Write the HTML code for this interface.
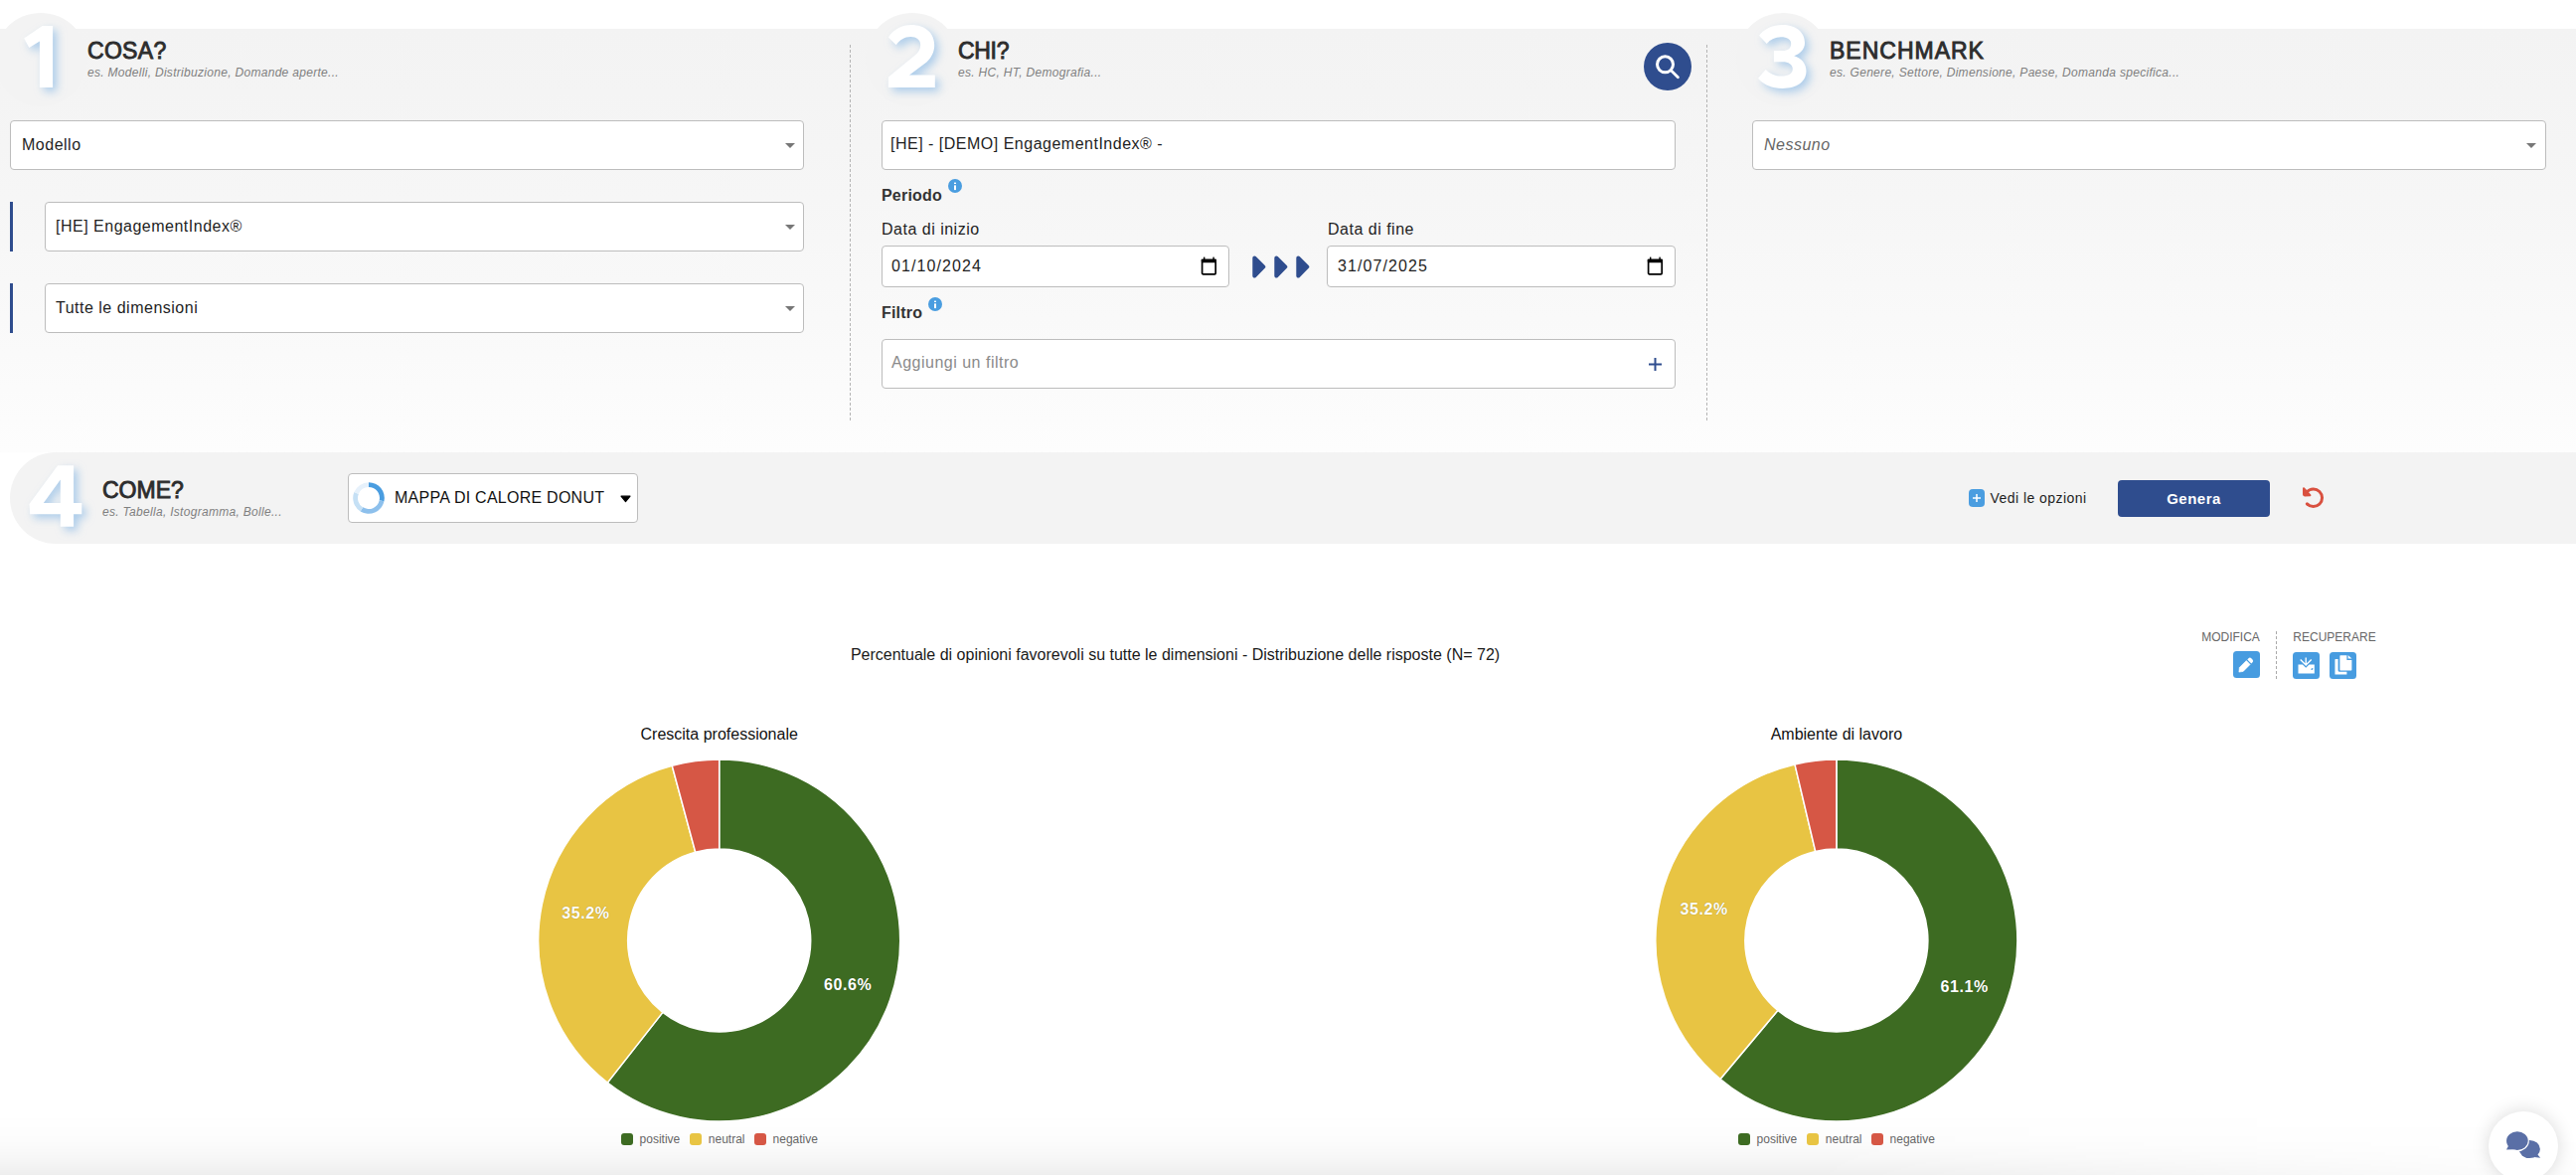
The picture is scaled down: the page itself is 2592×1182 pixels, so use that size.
<!DOCTYPE html>
<html><head><meta charset="utf-8"><style>
*{box-sizing:border-box;margin:0;padding:0}
html,body{width:2592px;height:1182px;overflow:hidden;background:#fff;font-family:"Liberation Sans",sans-serif;position:relative}
.t{position:absolute;white-space:nowrap}
.a{position:absolute}
.box{position:absolute;background:#fff;border:1px solid #bdbdbd;border-radius:4px}
.h{font-weight:bold;color:#333}
.hh{font-weight:normal;color:#2d2d2d;-webkit-text-stroke:0.9px #2d2d2d}
.sub{font-style:italic;color:#808080;letter-spacing:0.3px}
.num{position:absolute;font-weight:bold;color:#fff;font-size:88px;line-height:88px;text-shadow:3px 4px 6px rgba(90,150,215,0.55)}
.circ{position:absolute;width:94px;height:94px;border-radius:50%;background:#f3f3f3}
.caret{position:absolute;width:0;height:0;border-left:5px solid transparent;border-right:5px solid transparent;border-top:5px solid #777}
.dash{position:absolute;width:0;border-left:1px dashed #b5b5b5}
.ui{color:#1e1e1e;letter-spacing:0.5px}
.info{position:absolute;width:14px;height:14px;border-radius:50%;background:#4a9de0;color:#fff;font-size:10px;line-height:14px;text-align:center;font-weight:bold}
.btn{position:absolute;width:27px;height:27px;border-radius:3.5px;background:#479ce0}
</style></head><body>
<div class="a" style="left:0;top:1120px;width:2592px;height:62px;background:linear-gradient(rgba(0,0,0,0) 0%,rgba(0,0,0,0.012) 45%,rgba(0,0,0,0.035) 75%,rgba(0,0,0,0.068) 100%);-webkit-mask-image:linear-gradient(to right,#000 70%,rgba(0,0,0,0.15))"></div>
<div class="a" style="left:0;top:29px;width:2592px;height:426px;background:linear-gradient(#f3f3f3 0%,#f4f4f4 15%,#f6f6f6 40%,#f8f8f8 60%,#fbfbfb 85%,#fdfdfd 100%)"></div>
<div class="circ" style="left:-6px;top:13px"></div>
<div class="circ" style="left:871px;top:13px"></div>
<div class="circ" style="left:1747px;top:13px"></div>
<svg class="a" style="left:0px;top:0px;overflow:visible" width="80" height="110" viewBox="0 0 80 110"><g style="filter:drop-shadow(4px 4px 4px rgba(125,178,228,0.6))"><path d="M24.2,38.4 L42.6,26.1 L53.1,26.1 L53.1,88.1 L39.9,88.1 L39.9,41.5 L29.3,47.9 Z" fill="#fff" fill-rule="evenodd"/></g></svg>
<svg class="a" style="left:870px;top:0px;overflow:visible" width="90" height="110" viewBox="870 0 90 110"><g style="filter:drop-shadow(4px 4px 4px rgba(125,178,228,0.6))"><path d="M893.9,37.4 C899.5,29.5 907.5,25.1 917,25.1 C931,25.1 940.2,33.5 940.2,45.2 C940.2,52.5 937.2,57.8 932.7,62.2 L915,75.6 L940.8,75.6 L940.8,88.1 L893.9,88.1 L893.9,77.6 L920.5,55.8 C924.2,52.6 926.2,49.3 926.2,45.2 C926.2,40.2 922.2,37 916.3,37 C910.2,37 905.5,40 901.7,45.2 Z" fill="#fff" fill-rule="evenodd"/></g></svg>
<svg class="a" style="left:1750px;top:0px;overflow:visible" width="90" height="110" viewBox="1750 0 90 110"><g style="filter:drop-shadow(4px 4px 4px rgba(125,178,228,0.6))"><path d="M1770,35.8 C1775.5,29 1783.5,25 1793.5,25 C1806.5,25 1816,32 1816,42.9 C1816,49.5 1811.5,54 1805.2,56.2 C1812.5,58.3 1817.5,63.8 1817.5,71.5 C1817.5,82 1808,88.9 1793.5,88.9 C1783,88.9 1774.5,85 1769,78.7 L1776.7,70 C1780.5,74 1786,76.6 1792.5,76.6 C1799.5,76.6 1803.8,74 1803.8,69.5 C1803.8,65 1799.8,62.3 1793.5,62.3 L1784.9,62.3 L1784.9,51 L1793.5,51 C1799,51 1802.2,48.2 1802.2,43.9 C1802.2,39.8 1798.2,37.3 1792,37.3 C1786.2,37.3 1781.5,39.6 1777.7,43.9 Z" fill="#fff" fill-rule="evenodd"/></g></svg>
<div class="t hh" style="left:88px;top:39.53px;font-size:23px;line-height:23px;letter-spacing:0.3px">COSA?</div>
<div class="t sub" style="left:88px;top:66.84px;font-size:12px;line-height:12px;">es. Modelli, Distribuzione, Domande aperte...</div>
<div class="t hh" style="left:964px;top:39.53px;font-size:23px;line-height:23px;letter-spacing:-0.3px">CHI?</div>
<div class="t sub" style="left:964px;top:66.84px;font-size:12px;line-height:12px;">es. HC, HT, Demografia...</div>
<div class="t hh" style="left:1841px;top:39.53px;font-size:23px;line-height:23px;letter-spacing:1px">BENCHMARK</div>
<div class="t sub" style="left:1841px;top:66.84px;font-size:12px;line-height:12px;">es. Genere, Settore, Dimensione, Paese, Domanda specifica...</div>
<div class="dash" style="left:855px;top:45px;height:378px"></div>
<div class="dash" style="left:1717px;top:45px;height:378px"></div>
<div class="box" style="left:10px;top:121px;width:799px;height:50px"></div>
<div class="t ui" style="left:22px;top:137.96px;font-size:16px;line-height:16px;">Modello</div>
<div class="caret" style="left:789.6px;top:144px"></div>
<div class="a" style="left:10px;top:203px;width:3px;height:50px;background:#2f4d8e"></div>
<div class="box" style="left:45px;top:203px;width:764px;height:50px"></div>
<div class="t ui" style="left:56px;top:219.96px;font-size:16px;line-height:16px;">[HE] EngagementIndex®</div>
<div class="caret" style="left:789.6px;top:226px"></div>
<div class="a" style="left:10px;top:285px;width:3px;height:50px;background:#2f4d8e"></div>
<div class="box" style="left:45px;top:285px;width:764px;height:50px"></div>
<div class="t ui" style="left:56px;top:301.96px;font-size:16px;line-height:16px;">Tutte le dimensioni</div>
<div class="caret" style="left:789.6px;top:308px"></div>
<div class="a" style="left:1654px;top:43px;width:48px;height:48px;border-radius:50%;background:#2f4d8e"></div>
<svg class="a" style="left:1654px;top:43px" width="48" height="48" viewBox="0 0 48 48"><circle cx="21.5" cy="21.8" r="8" fill="none" stroke="#fff" stroke-width="3"/><line x1="27.6" y1="27.9" x2="34.4" y2="34.7" stroke="#fff" stroke-width="2.8" stroke-linecap="round"/></svg>
<div class="box" style="left:887px;top:121px;width:799px;height:50px"></div>
<div class="t ui" style="left:896px;top:137.46px;font-size:16px;line-height:16px;">[HE] - [DEMO] EngagementIndex® -</div>
<div class="t h" style="left:887px;top:188.76px;font-size:16px;line-height:16px;color:#333;letter-spacing:0.2px">Periodo</div>
<svg class="a" style="left:954px;top:180px" width="14" height="14" viewBox="0 0 14 14"><circle cx="7" cy="7" r="7" fill="#4a9de0"/><rect x="6" y="3.6" width="2" height="1.4" fill="#fff"/><rect x="6" y="6.4" width="2" height="4.7" fill="#fff"/></svg>
<div class="t ui" style="left:887px;top:222.96px;font-size:16px;line-height:16px;">Data di inizio</div>
<div class="t ui" style="left:1336px;top:222.96px;font-size:16px;line-height:16px;">Data di fine</div>
<div class="box" style="left:887px;top:247px;width:350px;height:42px"></div>
<div class="box" style="left:1335px;top:247px;width:351px;height:42px"></div>
<div class="t ui" style="left:897px;top:260.06px;font-size:16px;line-height:16px;letter-spacing:1.1px">01/10/2024</div>
<div class="t ui" style="left:1346px;top:260.06px;font-size:16px;line-height:16px;letter-spacing:1.1px">31/07/2025</div>
<svg class="a" style="left:1207.5px;top:258px" width="17" height="19" viewBox="0 0 17 19"><path d="M1.6,4.2 h13.6 v12.6 a1,1 0 0 1 -1,1 h-11.6 a1,1 0 0 1 -1,-1 z" fill="none" stroke="#000" stroke-width="1.7"/><rect x="0.8" y="2.6" width="15.2" height="3.6" rx="1" fill="#000"/><rect x="3" y="0.6" width="1.4" height="3" fill="#000"/><rect x="12.4" y="0.6" width="1.4" height="3" fill="#000"/></svg>
<svg class="a" style="left:1656.5px;top:258px" width="17" height="19" viewBox="0 0 17 19"><path d="M1.6,4.2 h13.6 v12.6 a1,1 0 0 1 -1,1 h-11.6 a1,1 0 0 1 -1,-1 z" fill="none" stroke="#000" stroke-width="1.7"/><rect x="0.8" y="2.6" width="15.2" height="3.6" rx="1" fill="#000"/><rect x="3" y="0.6" width="1.4" height="3" fill="#000"/><rect x="12.4" y="0.6" width="1.4" height="3" fill="#000"/></svg>
<svg class="a" style="left:1259.8px;top:257px" width="14" height="23" viewBox="0 0 14 23"><path d="M2.3,2.4 L11.3,11.4 L2.3,20.5 Z" fill="#2f4d8e" stroke="#2f4d8e" stroke-width="4" stroke-linejoin="round"/></svg>
<svg class="a" style="left:1281.8px;top:257px" width="14" height="23" viewBox="0 0 14 23"><path d="M2.3,2.4 L11.3,11.4 L2.3,20.5 Z" fill="#2f4d8e" stroke="#2f4d8e" stroke-width="4" stroke-linejoin="round"/></svg>
<svg class="a" style="left:1303.8px;top:257px" width="14" height="23" viewBox="0 0 14 23"><path d="M2.3,2.4 L11.3,11.4 L2.3,20.5 Z" fill="#2f4d8e" stroke="#2f4d8e" stroke-width="4" stroke-linejoin="round"/></svg>
<div class="t h" style="left:887px;top:306.86px;font-size:16px;line-height:16px;color:#333;letter-spacing:0.2px">Filtro</div>
<svg class="a" style="left:934px;top:298.5px" width="14" height="14" viewBox="0 0 14 14"><circle cx="7" cy="7" r="7" fill="#4a9de0"/><rect x="6" y="3.6" width="2" height="1.4" fill="#fff"/><rect x="6" y="6.4" width="2" height="4.7" fill="#fff"/></svg>
<div class="box" style="left:887px;top:341px;width:799px;height:50px"></div>
<div class="t ui" style="left:897px;top:357.46px;font-size:16px;line-height:16px;color:#8a8a8a">Aggiungi un filtro</div>
<svg class="a" style="left:1658px;top:358.5px" width="15" height="15" viewBox="0 0 15 15"><path d="M7.5,1 V14 M1,7.5 H14" stroke="#2f4d8e" stroke-width="2"/></svg>
<div class="box" style="left:1763px;top:121px;width:799px;height:50px"></div>
<div class="t ui" style="left:1775px;top:138.46px;font-size:16px;line-height:16px;font-style:italic;color:#666">Nessuno</div>
<div class="caret" style="left:2542px;top:144px"></div>
<div class="a" style="left:10px;top:455px;width:2582px;height:92px;background:#f3f3f3;border-radius:46px 0 0 46px"></div>
<svg class="a" style="left:0px;top:440px;overflow:visible" width="110" height="110" viewBox="0 440 110 110"><g style="filter:drop-shadow(4px 4px 4px rgba(125,178,228,0.6))"><path d="M58.1,468.2 L74.1,468.2 L74.1,506 L82.3,506 L82.3,517.2 L74.1,517.2 L74.1,529.8 L60.8,529.8 L60.8,517.2 L30.2,517.2 L29.5,507 Z M60.8,482.5 L60.8,506 L43.8,506 Z" fill="#fff" fill-rule="evenodd"/></g></svg>
<div class="t hh" style="left:103px;top:481.53px;font-size:23px;line-height:23px;letter-spacing:0px">COME?</div>
<div class="t sub" style="left:103px;top:508.84px;font-size:12px;line-height:12px;">es. Tabella, Istogramma, Bolle...</div>
<div class="box" style="left:350px;top:476px;width:292px;height:50px;border-radius:4px"></div>
<svg class="a" style="left:350px;top:476px" width="44" height="50" viewBox="0 0 44 50"><path d="M21.00,9.20 A15.8,15.8 0 0 1 36.45,28.29 L31.76,27.29 A11,11 0 0 0 21.00,14.00 Z" fill="#4a9de0"/><path d="M36.45,28.29 A15.8,15.8 0 0 1 12.63,38.40 L15.17,34.33 A11,11 0 0 0 31.76,27.29 Z" fill="#8dc0ec"/><path d="M12.63,38.40 A15.8,15.8 0 0 1 6.35,19.08 L10.80,20.88 A11,11 0 0 0 15.17,34.33 Z" fill="#c5e0f5"/><path d="M6.35,19.08 A15.8,15.8 0 0 1 21.00,9.20 L21.00,14.00 A11,11 0 0 0 10.80,20.88 Z" fill="#e6f1fb"/></svg>
<div class="t ui" style="left:397px;top:493.46px;font-size:16px;line-height:16px;color:#111;letter-spacing:0.25px">MAPPA DI CALORE DONUT</div>
<svg class="a" style="left:624px;top:498px" width="11" height="8" viewBox="0 0 11 8"><path d="M1,1.2 H10 L5.5,6.6 Z" fill="#000" stroke="#000" stroke-width="1.2" stroke-linejoin="round"/></svg>
<div class="a" style="left:1981px;top:492px;width:16px;height:18px;border-radius:4px;background:#4a9de0"></div>
<svg class="a" style="left:1981px;top:492px" width="16" height="18" viewBox="0 0 16 18"><path d="M8,4.9 V12.9 M4,8.9 H12" stroke="#fff" stroke-width="1.5"/></svg>
<div class="t ui" style="left:2002.5px;top:494.45px;font-size:14px;line-height:14px;color:#1e1e1e;letter-spacing:0.45px">Vedi le opzioni</div>
<div class="a" style="left:2131px;top:483px;width:153px;height:37px;border-radius:4px;background:#2f4d8e"></div>
<div class="t " style="left:1707.5px;width:1000px;text-align:center;top:494.10px;font-size:15px;line-height:15px;color:#fff;font-weight:bold;letter-spacing:0.5px">Genera</div>
<svg class="a" style="left:2315px;top:489px" width="26" height="24" viewBox="-12.7 -11.9 26 24"><path d="M-6.4,-6.1 A8.8,8.8 0 1 1 -6.3,6.0" fill="none" stroke="#d9503f" stroke-width="3" stroke-linecap="round"/><path d="M-9.7,-9.7 L-9.7,-3.3 Q-9.7,-2.5 -8.7,-2.5 L-3.3,-2.7 Z" fill="#d9503f" stroke="#d9503f" stroke-width="2" stroke-linejoin="round"/></svg>
<div class="t " style="left:682.5px;width:1000px;text-align:center;top:650.76px;font-size:16px;line-height:16px;color:#1a1a1a">Percentuale di opinioni favorevoli su tutte le dimensioni - Distribuzione delle risposte (N= 72)</div>
<div class="t " style="left:1744.5px;width:1000px;text-align:center;top:634.84px;font-size:12px;line-height:12px;color:#666">MODIFICA</div>
<div class="t " style="left:1849px;width:1000px;text-align:center;top:634.84px;font-size:12px;line-height:12px;color:#666">RECUPERARE</div>
<div class="dash" style="left:2290px;top:635px;height:48px;border-left-color:#aaa"></div>
<div class="btn" style="left:2246.5px;top:655.4px"></div>
<svg class="a" style="left:2246.5px;top:655.4px" width="27" height="27" viewBox="0 0 27 27"><path d="M6.3,16.6 L13.3,9.6 L17.1,13.4 L10.1,20.4 L5.9,21.1 Z" fill="#fff" stroke="#fff" stroke-width="0.6" stroke-linejoin="round"/><path d="M14.3,8.5 L15.5,7.3 Q16.9,5.9 18.3,7.3 L19.5,8.5 Q20.9,9.9 19.5,11.3 L18.3,12.5 Z" fill="#fff"/></svg>
<div class="btn" style="left:2307.3px;top:655.6px"></div>
<svg class="a" style="left:2307.3px;top:655.6px" width="27" height="27" viewBox="0 0 27 27"><path d="M5.5,12.4 H9.9 L13.2,15.7 L16.5,12.4 H21.8 V21.4 H5.5 Z" fill="#fff"/><path d="M13.2,5.4 V12.6 M7.7,7.5 L13.2,13 L18.7,7.5" fill="none" stroke="#fff" stroke-width="1.35"/><ellipse cx="19.4" cy="17" rx="1.2" ry="0.8" transform="rotate(-45 19.4 17)" fill="#479ce0"/></svg>
<div class="btn" style="left:2343.5px;top:655.6px"></div>
<svg class="a" style="left:2343.5px;top:655.6px" width="27" height="27" viewBox="0 0 27 27"><path d="M5.45,7.6 Q5.45,7 6.1,7 H8.6 V18.6 Q8.6,19.7 9.7,19.7 H17.4 V22.5 H5.45 Z" fill="#fff"/><path d="M10.4,3.9 Q10.4,3.34 11,3.34 H17.4 V8 H22.4 V17.8 Q22.4,18.4 21.8,18.4 H11 Q10.4,18.4 10.4,17.8 Z" fill="#fff"/><path d="M18.6,2.9 L22.5,6.6 H18.6 Z" fill="#fff"/></svg>
<svg class="a" style="left:0;top:0" width="2592" height="1182"><path d="M723.70,764.00 A182,182 0 1 1 611.25,1089.10 L666.86,1018.34 A92,92 0 1 0 723.70,854.00 Z" fill="#3d6b22" stroke="#fff" stroke-width="1.5"/><path d="M611.25,1089.10 A182,182 0 0 1 676.23,770.30 L699.70,857.18 A92,92 0 0 0 666.86,1018.34 Z" fill="#e8c443" stroke="#fff" stroke-width="1.5"/><path d="M676.23,770.30 A182,182 0 0 1 723.70,764.00 L723.70,854.00 A92,92 0 0 0 699.70,857.18 Z" fill="#d65745" stroke="#fff" stroke-width="1.5"/><path d="M1847.90,764.00 A182,182 0 1 1 1731.01,1085.50 L1788.81,1016.52 A92,92 0 1 0 1847.90,854.00 Z" fill="#3d6b22" stroke="#fff" stroke-width="1.5"/><path d="M1731.01,1085.50 A182,182 0 0 1 1805.97,768.90 L1826.70,856.47 A92,92 0 0 0 1788.81,1016.52 Z" fill="#e8c443" stroke="#fff" stroke-width="1.5"/><path d="M1805.97,768.90 A182,182 0 0 1 1847.90,764.00 L1847.90,854.00 A92,92 0 0 0 1826.70,856.47 Z" fill="#d65745" stroke="#fff" stroke-width="1.5"/></svg>
<div class="t " style="left:223.70000000000005px;width:1000px;text-align:center;top:730.76px;font-size:16px;line-height:16px;color:#111">Crescita professionale</div>
<div class="t " style="left:1347.9px;width:1000px;text-align:center;top:730.76px;font-size:16px;line-height:16px;color:#111">Ambiente di lavoro</div>
<div class="t " style="left:353.17364129963335px;width:1000px;text-align:center;top:983.44px;font-size:16px;line-height:16px;color:#fff;font-weight:bold;letter-spacing:0.6px;text-shadow:0 0 1px rgba(0,0,0,0.35)">60.6%</div>
<div class="t " style="left:89.45985782335822px;width:1000px;text-align:center;top:911.30px;font-size:16px;line-height:16px;color:#fff;font-weight:bold;letter-spacing:0.6px;text-shadow:0 0 1px rgba(0,0,0,0.35)">35.2%</div>
<div class="t " style="left:1476.6542372988258px;width:1000px;text-align:center;top:985.47px;font-size:16px;line-height:16px;color:#fff;font-weight:bold;letter-spacing:0.6px;text-shadow:0 0 1px rgba(0,0,0,0.35)">61.1%</div>
<div class="t " style="left:1214.5855039954488px;width:1000px;text-align:center;top:907.09px;font-size:16px;line-height:16px;color:#fff;font-weight:bold;letter-spacing:0.6px;text-shadow:0 0 1px rgba(0,0,0,0.35)">35.2%</div>
<div class="a" style="left:625px;top:1140px;width:12px;height:12px;border-radius:3px;background:#3d6b22"></div>
<div class="t " style="left:643.6px;top:1139.54px;font-size:12px;line-height:12px;color:#666">positive</div>
<div class="a" style="left:694.4px;top:1140px;width:12px;height:12px;border-radius:3px;background:#e8c443"></div>
<div class="t " style="left:712.8px;top:1139.54px;font-size:12px;line-height:12px;color:#666">neutral</div>
<div class="a" style="left:759.2px;top:1140px;width:12px;height:12px;border-radius:3px;background:#d65745"></div>
<div class="t " style="left:777.6px;top:1139.54px;font-size:12px;line-height:12px;color:#666">negative</div>
<div class="a" style="left:1749px;top:1140px;width:12px;height:12px;border-radius:3px;background:#3d6b22"></div>
<div class="t " style="left:1767.6px;top:1139.54px;font-size:12px;line-height:12px;color:#666">positive</div>
<div class="a" style="left:1818.4px;top:1140px;width:12px;height:12px;border-radius:3px;background:#e8c443"></div>
<div class="t " style="left:1836.8px;top:1139.54px;font-size:12px;line-height:12px;color:#666">neutral</div>
<div class="a" style="left:1883.2px;top:1140px;width:12px;height:12px;border-radius:3px;background:#d65745"></div>
<div class="t " style="left:1901.6px;top:1139.54px;font-size:12px;line-height:12px;color:#666">negative</div>
<div class="a" style="left:2504px;top:1118px;width:70px;height:70px;border-radius:50%;background:#fff;box-shadow:0 0 18px rgba(0,0,0,0.15)"></div>
<svg class="a" style="left:2504px;top:1118px" width="70" height="70" viewBox="0 0 70 70"><g fill="#5a6fa6"><ellipse cx="41.3" cy="38" rx="10.6" ry="9.1"/><path d="M48.6,42.4 L52.2,46.8 L45.8,45.9 Z"/></g><g fill="#5a6fa6" stroke="#fff" stroke-width="2.2" paint-order="stroke"><path d="M39.75,29.7 A10.85,9.4 0 1 0 18.05,29.7 A10.85,9.4 0 1 0 39.75,29.7 Z"/></g><path d="M20.6,33.6 L18.0,38.5 L25.8,38.2 Z" fill="#5a6fa6"/></svg>
</body></html>
